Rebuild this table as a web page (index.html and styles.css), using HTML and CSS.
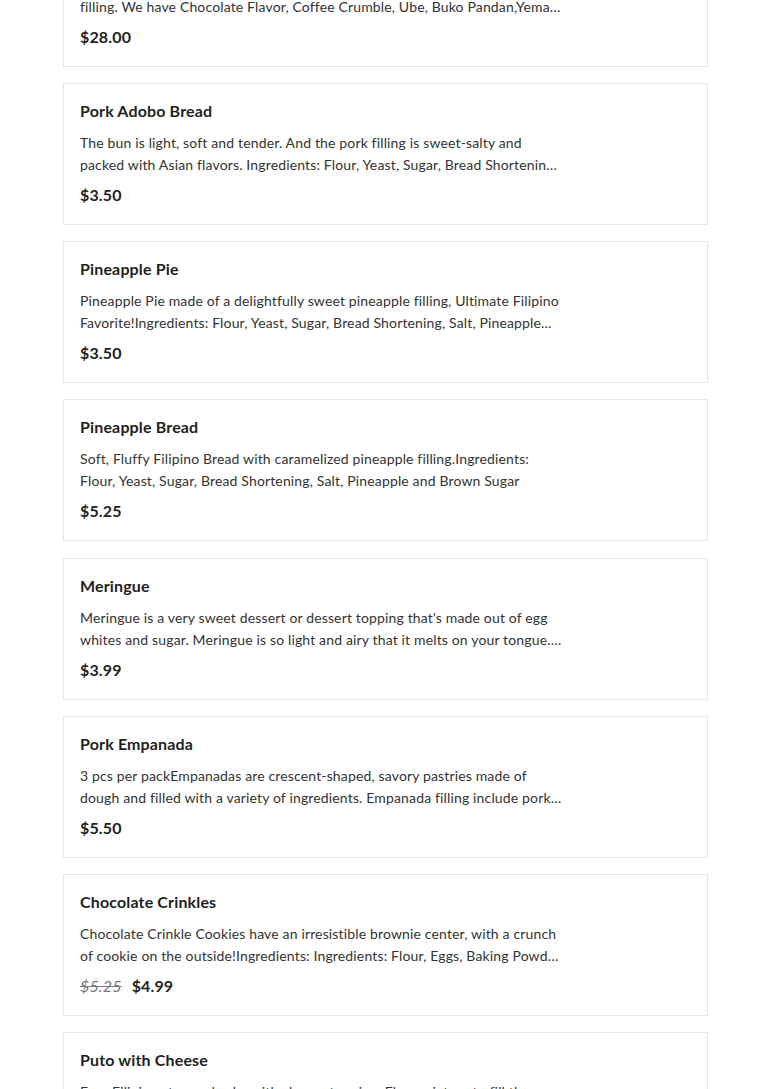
FILE: index.html
```html
<!DOCTYPE html>
<html>
<head>
<meta charset="utf-8">
<link rel="stylesheet" href="styles.css">
</head>
<body>
<div class="list">
  <div class="card">
    <div class="title">Ube Cheese Pandesal Box</div>
    <div class="desc">A dozen soft and fluffy pandesal rolls with a sweet and creamy<br>filling. We have Chocolate Flavor, Coffee Crumble, Ube, Buko Pandan,Yema and Cheese.</div>
    <div class="price"><span class="now">$28.00</span></div>
  </div>
  <div class="card">
    <div class="title">Pork Adobo Bread</div>
    <div class="desc">The bun is light, soft and tender. And the pork filling is sweet-salty and packed with Asian flavors. Ingredients: Flour, Yeast, Sugar, Bread Shortening, Salt, Pork Adobo</div>
    <div class="price"><span class="now">$3.50</span></div>
  </div>
  <div class="card">
    <div class="title">Pineapple Pie</div>
    <div class="desc">Pineapple Pie made of a delightfully sweet pineapple filling, Ultimate Filipino Favorite!Ingredients: Flour, Yeast, Sugar, Bread Shortening, Salt, Pineapple and Brown Sugar</div>
    <div class="price"><span class="now">$3.50</span></div>
  </div>
  <div class="card">
    <div class="title">Pineapple Bread</div>
    <div class="desc">Soft, Fluffy Filipino Bread with caramelized pineapple filling.Ingredients: Flour, Yeast, Sugar, Bread Shortening, Salt, Pineapple and Brown Sugar</div>
    <div class="price"><span class="now">$5.25</span></div>
  </div>
  <div class="card">
    <div class="title">Meringue</div>
    <div class="desc">Meringue is a very sweet dessert or dessert topping that's made out of egg whites and sugar. Meringue is so light and airy that it melts on your tongue. Ingredients: Egg Whites, Sugar</div>
    <div class="price"><span class="now">$3.99</span></div>
  </div>
  <div class="card">
    <div class="title">Pork Empanada</div>
    <div class="desc">3 pcs per packEmpanadas are crescent-shaped, savory pastries made of dough and filled with a variety of ingredients. Empanada filling include pork, potatoes, carrots and raisins.</div>
    <div class="price"><span class="now">$5.50</span></div>
  </div>
  <div class="card">
    <div class="title">Chocolate Crinkles</div>
    <div class="desc">Chocolate Crinkle Cookies have an irresistible brownie center, with a crunch of cookie on the outside!Ingredients: Ingredients: Flour, Eggs, Baking Powder, Cocoa, Sugar</div>
    <div class="price"><span class="was">$5.25</span><span class="now">$4.99</span></div>
  </div>
  <div class="card">
    <div class="title">Puto with Cheese</div>
    <div class="desc">Easy Filipino steamed cake with cheese topping. Flour mixture to fill the molds and topped with cheese slices. Ingredients: Flour, Sugar, Milk, Cheese</div>
    <div class="price"><span class="now">$2.99</span></div>
  </div>
</div>
</body>
</html>
```

FILE: styles.css
```css
html, body {
  margin: 0;
  padding: 0;
  background: #fff;
}
body {
  font-family: "Lato", "Liberation Sans", sans-serif;
  color: #222;
  letter-spacing: 0.15px;
  overflow: hidden;
}
.list {
  display: flex;
  flex-direction: column;
  gap: 16.17px;
  width: 645px;
  margin: -75px 0 0 63px;
}
.card {
  border: 1px solid #e6e6e6;
  padding: 15px 16px 16px 16px;
  display: flex;
  flex-direction: column;
  box-sizing: border-box;
  height: 142px;
}
.title {
  font-size: 16px;
  font-weight: 700;
  line-height: 24px;
  color: #1f1f1f;
}
.desc {
  margin-top: 9px;
  font-size: 14px;
  line-height: 22px;
  color: #333;
  max-width: 484px;
  display: -webkit-box;
  -webkit-line-clamp: 2;
  -webkit-box-orient: vertical;
  overflow: hidden;
}
.price {
  margin-top: 7px;
  font-size: 16px;
  line-height: 24px;
  font-weight: 700;
  display: flex;
  gap: 10px;
}
.was {
  font-weight: 400;
  font-style: italic;
  color: #777;
  text-decoration: line-through;
}
```
